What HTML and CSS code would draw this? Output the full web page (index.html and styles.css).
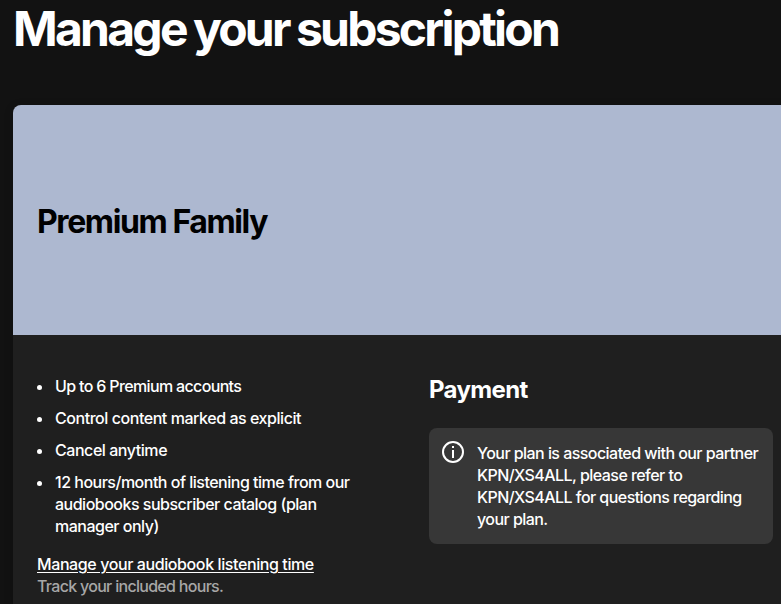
FILE: index.html
```html
<!DOCTYPE html>
<html lang="en">
<head>
  <meta charset="UTF-8">
  <meta name="viewport" content="width=device-width, initial-scale=1.0">
  <title>Manage your subscription</title>
  <link rel="stylesheet" href="styles.css">
</head>
<body>
  <main class="container">
    <h1>Manage your subscription</h1>

    <section class="plan-card">
      <div class="plan-header">
        <h2>Premium Family</h2>
      </div>
      <div class="plan-body">
        <div class="plan-column">
          <ul class="plan-features">
            <li class="tight">Up to 6 Premium accounts</li>
            <li>Control content marked as explicit</li>
            <li>Cancel anytime</li>
            <li class="long">12 hours/month of listening time from our audiobooks subscriber catalog (plan manager only)</li>
          </ul>
          <a class="plan-link" href="#">Manage your audiobook listening time</a>
          <p class="plan-note">Track your included hours.</p>
        </div>
        <div class="plan-column">
          <h3>Payment</h3>
          <div class="notice">
            <svg class="notice-icon" viewBox="0 0 24 24" width="24" height="24" aria-hidden="true">
              <circle cx="12" cy="12" r="10" fill="none" stroke="currentColor" stroke-width="2"/>
              <path d="M11 6h2v2h-2zM11 10h2v8h-2z" fill="currentColor"/>
            </svg>
            <p class="notice-text">Your plan is associated with our partner KPN/XS4ALL, please refer to KPN/XS4ALL for questions regarding your plan.</p>
          </div>
        </div>
      </div>
    </section>
  </main>
</body>
</html>
```

FILE: styles.css
```css
* {
  box-sizing: border-box;
}
body {
  margin: 0;
  height: 604px;
  overflow: hidden;
  background-color: #121212;
  color: #fff;
  font-family: Inter, "Liberation Sans", sans-serif;
  font-size: 16px;
  font-weight: 500;
  line-height: 22px;
}
h1, h2, h3, p, ul {
  margin: 0;
  padding: 0;
}
.container {
  width: 784px;
  margin-left: 13px;
}
h1 {
  height: 105px;
  padding-top: 1px;
  font-size: 48px;
  line-height: 56px;
  font-weight: 700;
  letter-spacing: -2.75px;
  word-spacing: -1.5px;
  white-space: nowrap;
}
.plan-card {
  height: 499px;
  border-radius: 8px 8px 0 0;
  overflow: hidden;
  background-color: #1f1f1f;
  box-shadow: 0 2px 10px rgba(0, 0, 0, 0.2);
}
.plan-header {
  display: flex;
  align-items: center;
  height: 230px;
  padding: 3px 24px 0;
  background-color: #adb8d0;
  color: #000;
}
h2 {
  font-size: 32px;
  line-height: 40px;
  font-weight: 700;
  letter-spacing: -1.4px;
}
.plan-body {
  display: flex;
  gap: 48px;
  padding: 40px 24px 0;
}
.plan-column {
  width: 344px;
}
.plan-features {
  list-style: none;
  display: flex;
  flex-direction: column;
  gap: 10px;
  margin-bottom: 16px;
}
.plan-features li {
  display: flex;
  letter-spacing: -0.45px;
}
.plan-features .tight {
  letter-spacing: -0.65px;
}
.plan-features li::before {
  content: "";
  flex: none;
  width: 5px;
  height: 5px;
  margin: 10px 13px 0 0;
  border-radius: 50%;
  background-color: #fff;
}
.plan-features .long {
  width: 322px;
  letter-spacing: -0.5px;
}
.plan-link {
  display: block;
  width: max-content;
  color: #fff;
  letter-spacing: -0.4px;
  text-underline-offset: 2px;
}
.plan-note {
  color: #a7a7a7;
  letter-spacing: -0.7px;
}
h3 {
  margin-bottom: 23px;
  font-size: 24px;
  line-height: 30px;
  font-weight: 700;
  letter-spacing: -0.65px;
}
.notice {
  display: flex;
  gap: 12px;
  padding: 12px;
  border-radius: 8px;
  background-color: #373737;
}
.notice-icon {
  flex: none;
}
.notice-text {
  padding: 2px 0;
  letter-spacing: -0.55px;
}
```
